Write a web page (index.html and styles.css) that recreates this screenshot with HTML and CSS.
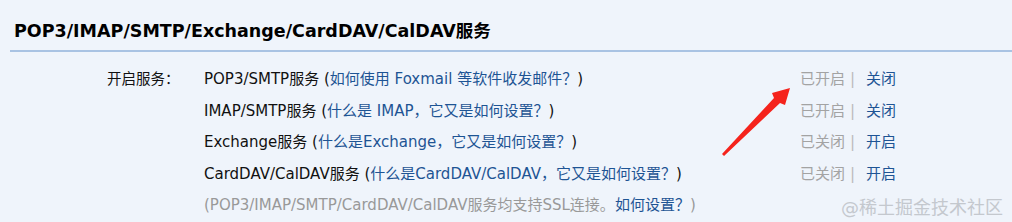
FILE: index.html
```html
<!DOCTYPE html>
<html lang="zh-CN">
<head>
    <meta charset="UTF-8">
    <title>账户设置</title>
    <link rel="stylesheet" href="styles.css">
</head>
<body>
    <div class="panel">
        <h2 class="panel-title">POP3/IMAP/SMTP/Exchange/CardDAV/CalDAV服务</h2>
        <div class="services">
            <div class="label">开启服务：</div>
            <div class="service">POP3/SMTP服务 (<a href="#">如何使用 Foxmail 等软件收发邮件？</a>)</div>
            <div class="status"><span class="state">已开启</span><span class="sep">|</span><a href="#">关闭</a></div>

            <div class="label"></div>
            <div class="service">IMAP/SMTP服务 (<a href="#">什么是 IMAP，它又是如何设置？</a>)</div>
            <div class="status"><span class="state">已开启</span><span class="sep">|</span><a href="#">关闭</a></div>

            <div class="label"></div>
            <div class="service">Exchange服务 (<a href="#">什么是Exchange，它又是如何设置？</a>)</div>
            <div class="status"><span class="state">已关闭</span><span class="sep">|</span><a href="#">开启</a></div>

            <div class="label"></div>
            <div class="service">CardDAV/CalDAV服务 (<a href="#">什么是CardDAV/CalDAV，它又是如何设置？</a>)</div>
            <div class="status"><span class="state">已关闭</span><span class="sep">|</span><a href="#">开启</a></div>

            <div class="label"></div>
            <div class="service note">(POP3/IMAP/SMTP/CardDAV/CalDAV服务均支持SSL连接。<a href="#">如何设置？</a>)</div>
            <div class="status"></div>
        </div>
    </div>

    <svg class="arrow" width="100" height="90" viewBox="0 0 100 90">
        <polygon points="22,74 74,18 72,13 90,8 85,25 80,23 24,76" fill="#f5231c"/>
    </svg>
    <div class="watermark">@稀土掘金技术社区</div>
</body>
</html>
```

FILE: styles.css
```css
body {
    margin: 0;
    background-color: #eff4fb;
    font-family: "DejaVu Sans", "Noto Sans CJK SC", sans-serif;
    color: #111;
    height: 222px;
    position: relative;
    overflow: hidden;
}

a {
    color: #1e5494;
    text-decoration: none;
}

.panel {
    padding-left: 10px;
}

.panel-title {
    margin: 0;
    padding: 20px 0 8px 4px;
    font-size: 17.5px;
    line-height: 22px;
    font-weight: bold;
    color: #000;
    border-bottom: 2px solid #a9c3e3;
}

.services {
    display: grid;
    grid-template-columns: 194px 596px auto;
    grid-auto-rows: 31.5px;
    margin-top: 10px;
    font-size: 15px;
    align-items: center;
}

.label {
    padding-left: 97px;
    font-size: 14.5px;
}

.status {
    color: #a3a3a3;
}

.sep {
    color: #bbb;
    margin: 0 11px 0 5px;
}

.note {
    color: #999;
}

.arrow {
    position: absolute;
    left: 700px;
    top: 80px;
}

.watermark {
    position: absolute;
    left: 841px;
    top: 193px;
    font-size: 18px;
    color: #c4c8ce;
}
```
